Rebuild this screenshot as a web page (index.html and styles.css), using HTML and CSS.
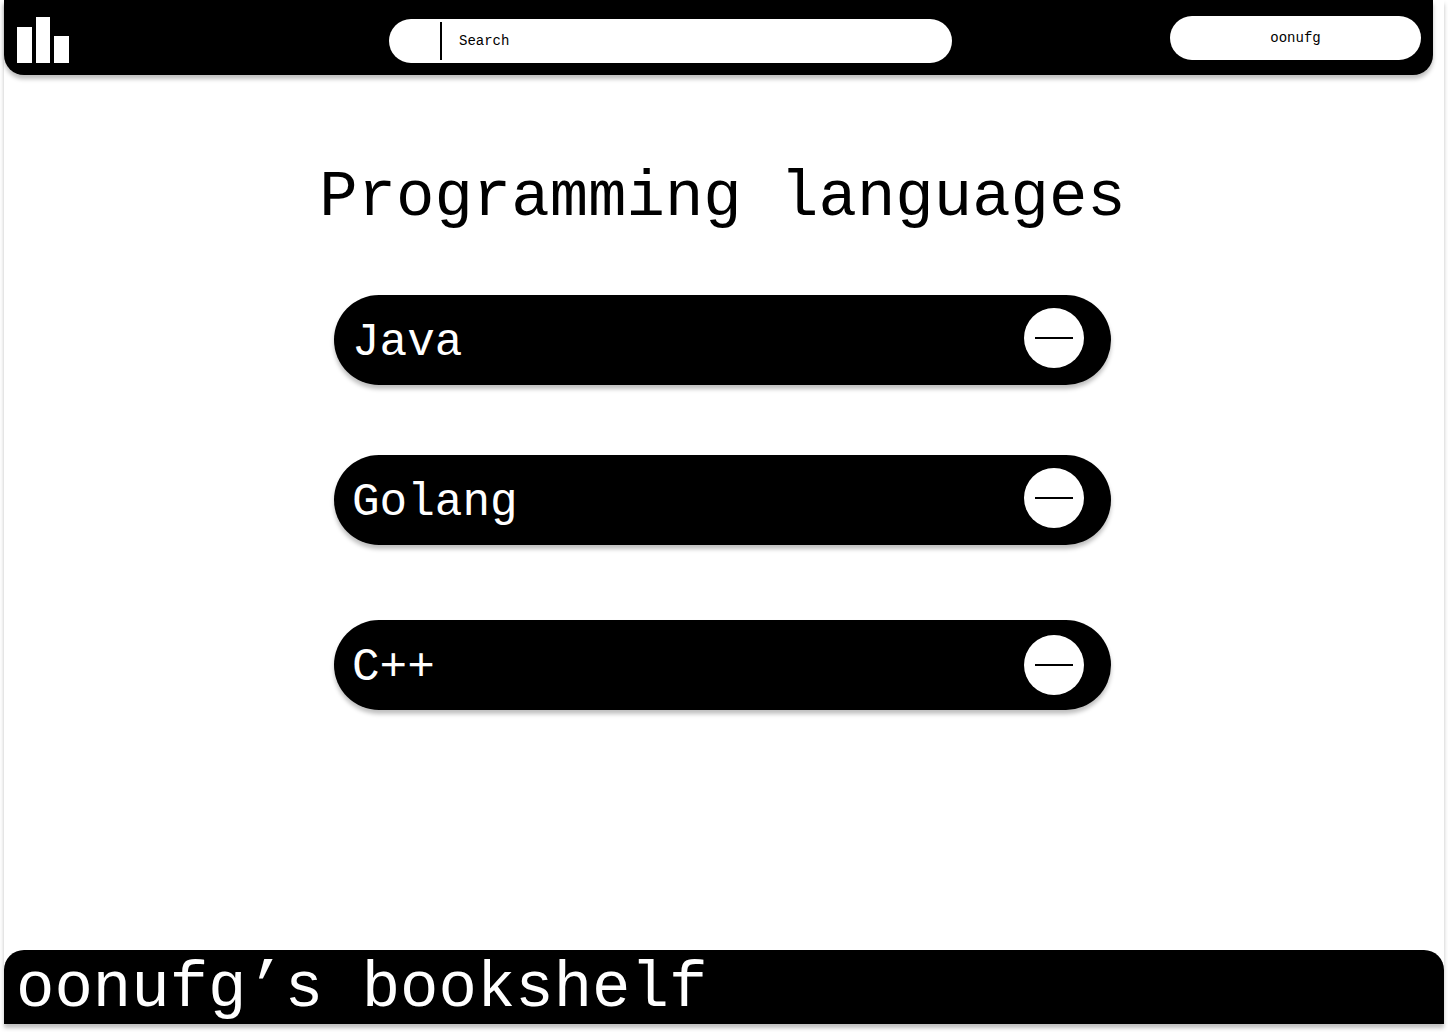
FILE: index.html
```html
<!DOCTYPE html>
<html lang="en">
<head>
<meta charset="utf-8">
<meta name="viewport" content="width=device-width, initial-scale=1">
<title>oonufg’s bookshelf</title>
<link rel="stylesheet" href="styles.css">
</head>
<body>
<div class="frame">
  <header class="topbar">
    <a class="logo" href="#" aria-label="Home">
      <svg width="52" height="46" viewBox="0 0 52 46" fill="#fff" aria-hidden="true">
        <rect x="0" y="10" width="15" height="36"/>
        <rect x="19" y="0" width="14" height="46"/>
        <rect x="37" y="19" width="15" height="27"/>
      </svg>
    </a>
    <form class="search" role="search">
      <input class="search-input" type="text" placeholder="Search" aria-label="Search">
    </form>
    <button class="account" type="button">oonufg</button>
  </header>
  <main class="content">
    <h1 class="title">Programming languages</h1>
    <ul class="shelves">
      <li class="shelf"><span class="shelf-name">Java</span><button class="collapse" type="button" aria-label="Collapse Java"><span class="dash"></span></button></li>
      <li class="shelf"><span class="shelf-name">Golang</span><button class="collapse" type="button" aria-label="Collapse Golang"><span class="dash"></span></button></li>
      <li class="shelf shelf-last"><span class="shelf-name">C++</span><button class="collapse" type="button" aria-label="Collapse C++"><span class="dash"></span></button></li>
    </ul>
  </main>
  <footer class="footer">oonufg’s bookshelf</footer>
</div>
</body>
</html>
```

FILE: styles.css
```css
* { box-sizing: border-box; }

body {
  margin: 0;
  padding: 0 4px 8px;
  background: #fff;
  color: #000;
  font-family: "Liberation Mono", monospace;
}

.frame {
  display: flex;
  flex-direction: column;
  min-height: calc(100vh - 8px);
  background: #fff;
  box-shadow: 0 4px 4px rgba(0, 0, 0, 0.25);
}

.topbar {
  display: grid;
  grid-template-columns: 52px 320fr 563fr 218fr 251px;
  align-items: start;
  height: 75px;
  margin-right: 11px;
  padding: 16px 12px 0 13px;
  background: #000;
  border-radius: 0 0 20px 20px;
  box-shadow: 0 4px 4px rgba(0, 0, 0, 0.25);
}

.logo { padding-top: 1px; }
.logo svg { display: block; }

.search {
  grid-column: 3;
  display: flex;
  align-items: center;
  height: 44px;
  margin-top: 3px;
  padding: 0 22px 0 51px;
  background: #fff;
  border-radius: 22px;
}

.search-input {
  flex: 1;
  min-width: 0;
  height: 38px;
  padding: 0 0 0 17px;
  border: 0;
  border-left: 2px solid #000;
  background: transparent;
  color: #000;
  font: 14px "Liberation Mono", monospace;
  outline: none;
}

.search-input::placeholder { color: #000; opacity: 1; }

.account {
  grid-column: 5;
  height: 44px;
  padding: 0;
  border: 0;
  border-radius: 22px;
  background: #fff;
  color: #000;
  font: 14px "Liberation Mono", monospace;
}

.content {
  flex: 1;
  padding: 83px 3px 80px 0;
}

.title {
  margin: 0 0 57px;
  font-size: 64px;
  font-weight: 400;
  line-height: 80px;
  text-align: center;
}

.shelves {
  display: flex;
  flex-direction: column;
  gap: 70px;
  max-width: 777px;
  margin: 0 auto;
  padding: 0;
  list-style: none;
}

.shelf {
  display: flex;
  align-items: flex-start;
  justify-content: space-between;
  height: 90px;
  padding: 13px 27px 0 18px;
  border-radius: 45px;
  background: #000;
  color: #fff;
  box-shadow: 0 4px 4px rgba(0, 0, 0, 0.25);
}

.shelf-last {
  margin-top: 5px;
  padding-top: 15px;
}

.shelf-name {
  font-size: 46px;
  line-height: 70px;
}

.shelf-last .shelf-name { line-height: 66px; }

.collapse {
  display: flex;
  align-items: center;
  justify-content: center;
  width: 60px;
  height: 60px;
  padding: 0;
  border: 0;
  border-radius: 50%;
  background: #fff;
}

.dash {
  width: 38px;
  height: 2px;
  background: #000;
}

.footer {
  min-height: 74px;
  padding: 4px 12px 0;
  border-radius: 20px 20px 0 0;
  background: #000;
  color: #fff;
  font-size: 64px;
  line-height: 70px;
}
```
